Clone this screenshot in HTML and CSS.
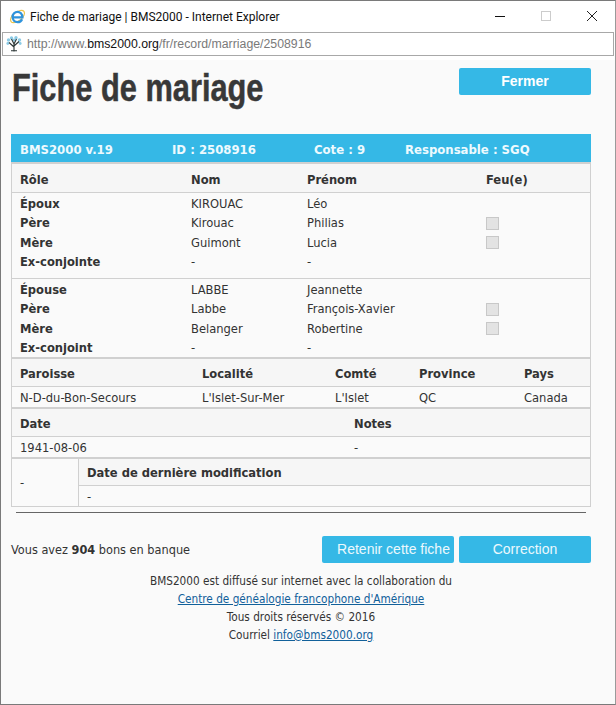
FILE: index.html
```html
<!DOCTYPE html>
<html lang="fr">
<head>
<meta charset="utf-8">
<title>Fiche de mariage | BMS2000</title>
<link rel="stylesheet" href="styles.css">
</head>
<body>
<div class="window">
  <div class="titlebar">
    <svg class="ie" viewBox="0 0 17 17" width="17" height="17">
      <ellipse cx="8.500" cy="8.500" rx="8.200" ry="4.400" transform="rotate(-38 8.500 8.500)" fill="none" stroke="#efc54a" stroke-width="1.200"/>
      <path d="M4.300 9.300H13.400C13.400 5.800 11 3.800 8.600 3.800C5.800 3.800 3.600 6 3.600 9C3.600 12 5.800 14.200 8.600 14.200C10.700 14.200 12.300 13.200 13.100 11.300" fill="none" stroke="#2f93dc" stroke-width="2.300"/>
    </svg>
    <span class="wintitle">Fiche de mariage | BMS2000 - Internet Explorer</span>
    <div class="winctrls">
      <svg width="12" height="12" viewBox="0 0 12 12"><path d="M1 6.500H11" stroke="#111" stroke-width="1"/></svg>
      <svg width="12" height="12" viewBox="0 0 12 12"><rect x="1.500" y="1.500" width="9" height="9" fill="none" stroke="#ccc"/></svg>
      <svg width="12" height="12" viewBox="0 0 12 12"><path d="M1 1L11 11M11 1L1 11" stroke="#222" stroke-width="1"/></svg>
    </div>
  </div>
  <div class="addressbar">
    <svg class="fav" viewBox="0 0 16 16" width="16" height="16">
      <g fill="#8ccbe6"><circle cx="2.500" cy="4" r="1.700"/><circle cx="5.500" cy="2" r="1.700"/><circle cx="10" cy="1.800" r="1.700"/><circle cx="13.500" cy="4" r="1.700"/><circle cx="1.800" cy="7.500" r="1.400"/><circle cx="14.200" cy="7.500" r="1.400"/><circle cx="8" cy="4" r="1.500"/></g>
      <path d="M8 15.500V8M8 11L3 6.500M8 10L13 5.500M8 8L5.500 3M8 8L10.500 3M5 14.800H11" stroke="#2a3535" stroke-width="1.100" fill="none"/>
    </svg>
    <span class="url">http://www.<b>bms2000.org</b>/fr/record/marriage/2508916</span>
  </div>
  <main class="page">
    <header class="pagehead">
      <h1>Fiche de mariage</h1>
      <a class="btn">Fermer</a>
    </header>

    <section class="record">
      <div class="banner"><span class="b1">BMS2000 v.19</span><span class="b2">ID : 2508916</span><span class="b3">Cote : 9</span><span>Responsable : SGQ</span></div>

      <div class="people headrow">
        <span>Rôle</span><span>Nom</span><span>Prénom</span><span>Feu(e)</span>
      </div>
      <div class="group">
        <div class="people"><b>Époux</b><span>KIROUAC</span><span>Léo</span><span></span></div>
        <div class="people"><b>Père</b><span>Kirouac</span><span>Philias</span><span class="chk"></span></div>
        <div class="people"><b>Mère</b><span>Guimont</span><span>Lucia</span><span class="chk"></span></div>
        <div class="people"><b>Ex-conjointe</b><span>-</span><span>-</span><span></span></div>
      </div>
      <div class="group second">
        <div class="people"><b>Épouse</b><span>LABBE</span><span>Jeannette</span><span></span></div>
        <div class="people"><b>Père</b><span>Labbe</span><span>François-Xavier</span><span class="chk"></span></div>
        <div class="people"><b>Mère</b><span>Belanger</span><span>Robertine</span><span class="chk"></span></div>
        <div class="people"><b>Ex-conjoint</b><span>-</span><span>-</span><span></span></div>
      </div>

      <div class="place headrow thick">
        <span>Paroisse</span><span>Localité</span><span>Comté</span><span>Province</span><span>Pays</span>
      </div>
      <div class="place datarow">
        <span>N-D-du-Bon-Secours</span><span>L'Islet-Sur-Mer</span><span>L'Islet</span><span>QC</span><span>Canada</span>
      </div>

      <div class="dates headrow thick"><span>Date</span><span>Notes</span></div>
      <div class="dates datarow"><span>1941-08-06</span><span>-</span></div>

      <div class="modif">
        <div class="modif-left">-</div>
        <div class="modif-right">
          <div class="headrow modif-head">Date de dernière modification</div>
          <div class="datarow modif-data">-</div>
        </div>
      </div>
    </section>

    <hr class="rule">

    <div class="actions">
      <p class="bank">Vous avez <b>904</b> bons en banque</p>
      <div class="actionbtns"><a class="btn light shifted">Retenir cette fiche</a><a class="btn light">Correction</a></div>
    </div>

    <footer class="foot">
      <p>BMS2000 est diffusé sur internet avec la collaboration du</p>
      <p><a href="#">Centre de généalogie francophone d'Amérique</a></p>
      <p>Tous droits réservés © 2016</p>
      <p>Courriel <a href="#">info@bms2000.org</a></p>
    </footer>
  </main>
</div>
</body>
</html>
```
FILE: styles.css
```css
* { box-sizing: border-box; }
html, body { margin: 0; height: 100%; }
body { font-family: "DejaVu Sans Condensed", "DejaVu Sans", sans-serif; font-size: 12.8px; color: #333; background: #fff; overflow: hidden; }
.window { width: 616px; height: 705px; border: 1px solid #7a7a7a; border-right-color: #9a9a9a; display: flex; flex-direction: column; background: #fff; }
.titlebar { height: 31px; flex: none; display: flex; align-items: center; padding-left: 8px; }
.ie { flex: none; margin-right: 4px; }
.wintitle { font-family: Roboto, "Liberation Sans", sans-serif; font-size: 12px; color: #111; }
.winctrls { margin-left: auto; display: flex; gap: 34px; padding: 0 17px 2px 0; }
.addressbar { height: 24px; flex: none; margin: 0 1px; border: 1px solid #a8a8a8; display: flex; align-items: center; padding-left: 3px; gap: 5px; }
.url { font-family: "Liberation Sans", sans-serif; font-size: 12.3px; color: #7a7a7a; }
.url b { font-weight: normal; color: #111; }
.page { flex: 1; margin-top: 4px; background: #fafafa; padding: 0 24px 0 10px; display: flex; flex-direction: column; }
.pagehead { display: flex; justify-content: space-between; align-items: flex-start; height: 74px; padding-top: 8px; }
h1 { margin: 0 0 0 1px; font-family: "Liberation Sans", sans-serif; font-weight: bold; font-size: 38px; line-height: 40px; color: #383838; transform: scaleX(0.81); transform-origin: left center; white-space: nowrap; -webkit-text-stroke: 0.5px #383838; }
.btn { display: flex; align-items: center; justify-content: center; width: 132px; height: 27px; padding-bottom: 2px; background: #35b8e6; border-radius: 2px; color: #fff; font-family: "Liberation Sans", sans-serif; font-size: 14px; font-weight: bold; }
.btn.light { font-weight: normal; color: #ecf8fd; }
.btn.shifted { padding-left: 11px; }
.record { width: 580px; border: 1px solid #d0d0d0; border-top: 0; }
.banner { height: 28px; padding-top: 2px; margin: 0 -1px; background: #35b8e6; color: #eefafe; font-family: "DejaVu Sans Condensed", "DejaVu Sans", sans-serif; font-weight: bold; font-size: 13px; display: flex; align-items: center; padding-left: 9px; }
.banner span { white-space: nowrap; }
.b1 { width: 152px; }
.b2 { width: 142px; }
.b3 { width: 91px; }
.people { display: grid; grid-template-columns: 171px 116px 179px 1fr; padding-left: 8px; height: 19.300px; align-items: center; }
.people b, .headrow { font-weight: bold; }
.headrow { background: #f6f6f6; }
.people.headrow { height: 31px; padding-top: 2px; border-top: 2px solid #d0d0d0; border-bottom: 1px solid #d0d0d0; }
.group { padding: 1px 0 7px; height: 86px; border-bottom: 1px solid #d0d0d0; }
.group.second { height: 78px; padding: 1px 0 0; border-bottom: 0; }
.chk { display: block; width: 13px; height: 13px; margin-top: 1px; background: #e3e3e3; border: 1px solid #c8c8c8; }
.place { display: grid; grid-template-columns: 182px 133px 84px 105px 1fr; padding-left: 8px; align-items: center; }
.dates { display: grid; grid-template-columns: 334px 1fr; padding-left: 8px; align-items: center; }
.thick { height: 30px; padding-top: 2px; border-top: 2px solid #d0d0d0; border-bottom: 1px solid #d0d0d0; }
.datarow { height: 20px; }
.modif { display: flex; height: 49px; border-top: 2px solid #d0d0d0; }
.modif-left { width: 67px; flex: none; padding-left: 8px; display: flex; align-items: center; border-right: 1px solid #d0d0d0; }
.modif-right { flex: 1; }
.modif-head { height: 27px; padding-left: 8px; display: flex; align-items: center; border-bottom: 1px solid #d0d0d0; }
.modif-data { padding-left: 8px; display: flex; align-items: center; }
.rule { width: 570px; margin: 5px 0 0 5px; border: 0; border-top: 1px solid #666; height: 1px; }
.actions { width: 580px; display: flex; justify-content: space-between; align-items: center; margin-top: 23px; }
.bank { margin: 0; font-size: 12.600px; }
.actionbtns { display: flex; gap: 5px; }
.foot { width: 580px; margin-top: 9px; text-align: center; font-size: 11.700px; }
.foot p { margin: 0; line-height: 18px; }
.foot a { color: #11609a; }
```
